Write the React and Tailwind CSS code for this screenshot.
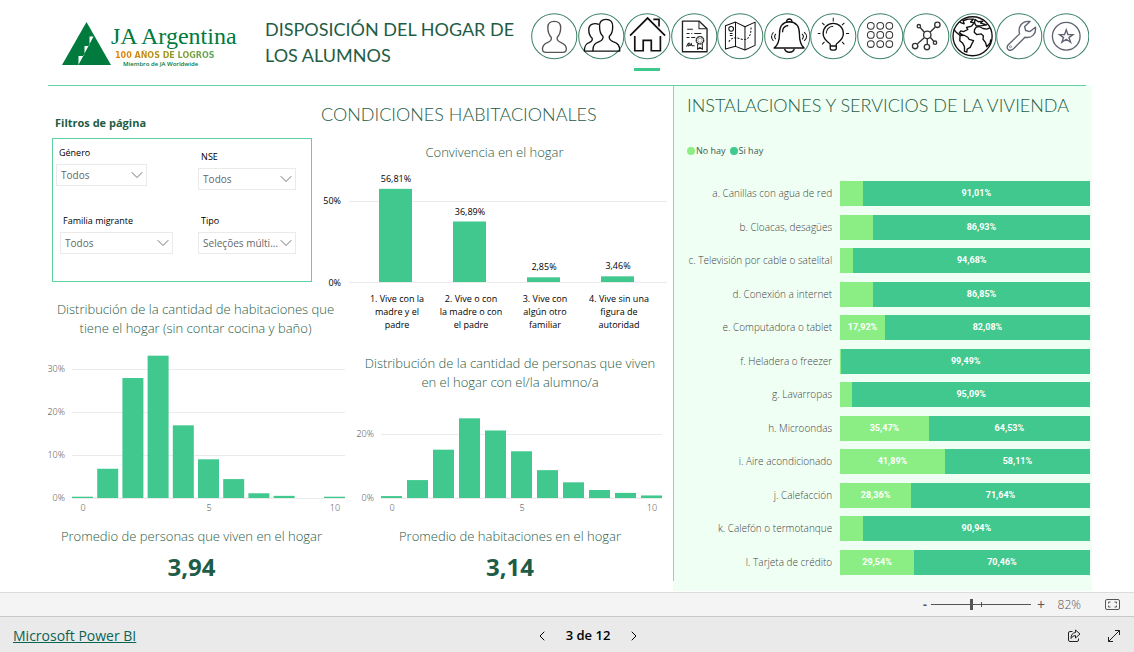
import React, { useState } from 'react';
import { ChevronDown, ChevronLeft, ChevronRight } from 'lucide-react';

// Iconos de la barra de navegación, dibujados en un lienzo de 138 x 138
const icons = {
  alumno: (
    <path
      stroke="#555"
      d="M69 25C57 25 50 32 50 43C50 56 54 66 60 72C62 80 58 84 50 87C40 91 34 96 34 107C34 115 38 117 44 117H94C101 117 105 114 105 107C105 96 98 91 88 87C80 84 76 80 78 72C84 66 88 56 88 43C88 32 81 25 69 25Z"
    />
  ),
  familia: (
    <g stroke="#111" strokeWidth="4">
      <path d="M83 19C70 19 63 27 64 40C64 54 68 64 74 69C76 77 72 81 63 85C50 90 44 95 44 113H124C124 95 118 90 104 85C95 81 91 77 93 69C99 64 103 54 103 40C103 27 96 19 83 19Z" />
      <path d="M62 34C47 28 31 34 32 50C32 62 36 70 42 75C44 82 40 85 33 88C22 92 19 98 19 113H44" />
    </g>
  ),
  hogar: (
    <g stroke="#111" strokeWidth="5" strokeLinejoin="miter">
      <path d="M18 67L70 15L122 67" />
      <path d="M87 19H104V40" />
      <path d="M32 68V112H57V81H81V112H108V68" />
    </g>
  ),
  certificado: (
    <g stroke="#222" strokeWidth="3">
      <path d="M34 24H83L107 47V115H34Z" strokeWidth="4" />
      <path d="M83 24V47H107" />
      <path d="M48 48H65M46 61H55M60 61H63M69 61H90M46 73H55M60 73H72" />
      <path d="M46 100C52 84 58 88 52 96C48 101 55 94 58 96L60 90L62 97H70" />
      <circle cx="86" cy="81" r="11" strokeWidth="4" strokeDasharray="5 1" />
      <circle cx="86" cy="81" r="6" strokeWidth="1" />
      <path d="M79 91V108L86 102L93 108V91" />
    </g>
  ),
  mapa: (
    <g stroke="#111" strokeWidth="3">
      <path d="M25 38L55 27L83 41L113 27V96L83 110L55 99L25 107Z" />
      <path d="M55 27V99M83 41V110" />
      <circle cx="42" cy="47" r="7" />
      <path d="M38 61H46M38 67H46" />
      <path strokeDasharray="6 4" d="M35 85C48 66 62 76 78 79C98 79 101 61 101 42" />
    </g>
  ),
  alerta: (
    <g stroke="#111" strokeWidth="4">
      <path d="M30 104C43 95 46 80 46 61C46 38 55 27 75 26C95 27 105 38 105 61C105 80 108 95 119 104Z" />
      <path d="M67 26C66 15 84 15 83 26M61 106C65 120 86 120 90 106" />
      <path d="M55 57C55 46 61 38 72 37" />
      <path strokeWidth="3" d="M28 57Q17 70 28 83M35 62Q28 70 35 78M119 57Q134 70 119 83M113 62Q121 70 113 78" />
    </g>
  ),
  idea: (
    <g stroke="#111" strokeWidth="4">
      <path d="M60 93C60 89 39 82 39 61C39 43 52 31 69 31C86 31 99 43 99 61C99 82 78 89 78 93V105C78 112 60 112 60 105ZM60 98H78" />
      <path d="M48 61C49 48 57 40 69 39" strokeWidth="3" />
      <path d="M69 14V25M23 61H31M107 61H116M36 29L43 36M102 29L95 36M36 93L43 86M102 93L95 86" strokeWidth="3" />
    </g>
  ),
  grilla: (
    <g stroke="#333" strokeWidth="3">
      {[38, 65, 92].map((y) => [41, 69, 96].map((x) => <circle key={`${x}-${y}`} cx={x} cy={y} r="10" />))}
    </g>
  ),
  red: (
    <g stroke="#333" strokeWidth="4">
      <path d="M80 57L95 42M64 58L51 43M64 73L43 91M72 76V92M81 72L91 84" />
      <circle cx="72" cy="65" r="11" />
      <circle cx="102" cy="35" r="8" />
      <circle cx="47" cy="39" r="5" />
      <circle cx="36" cy="98" r="8" />
      <circle cx="71" cy="101" r="8" />
      <circle cx="95" cy="88" r="5" />
    </g>
  ),
  mundo: (
    <g stroke="#111" strokeWidth="4">
      <circle cx="67" cy="69" r="58" />
      <path d="M28 27L42 32L39 23L53 18L70 18L61 27L72 29L64 39L49 43L53 49L40 55L32 53L28 59L37 65L29 66L16 55L12 48" />
      <path d="M30 67L42 66L53 72L57 78L70 82L65 91L60 102L51 107L50 116L43 114L43 100L38 90L29 82Z" />
      <path d="M74 19L84 26L98 24L91 30L109 35L90 38L78 38L73 30Z" />
      <path d="M119 44L109 48L98 46L86 40L78 42L73 49L72 57L79 64L93 62L99 68L98 78L105 87L109 100L119 89L121 78" />
    </g>
  ),
  herramientas: (
    <g stroke="#5f6270">
      <path d="M35 96L70 62C64 40 78 22 101 25L85 40L88 52L101 55L117 42C120 61 107 76 86 72L52 106C43 115 28 109 35 96Z" />
      <circle cx="43" cy="100" r="3" strokeWidth="2" />
    </g>
  ),
  favoritos: (
    <g stroke="#5f6270">
      <circle cx="69" cy="69" r="41" />
      <path strokeLinejoin="miter" d="M69 50L74 64H89L77 73L82 87L69 78L56 87L61 73L49 64H64Z" />
    </g>
  ),
};

const pages = [
  { id: 'alumno', label: 'Alumno' },
  { id: 'familia', label: 'Familia' },
  { id: 'hogar', label: 'Hogar' },
  { id: 'certificado', label: 'Certificado' },
  { id: 'mapa', label: 'Mapa' },
  { id: 'alerta', label: 'Alertas' },
  { id: 'idea', label: 'Ideas' },
  { id: 'grilla', label: 'Indicadores' },
  { id: 'red', label: 'Red' },
  { id: 'mundo', label: 'Mundo' },
  { id: 'herramientas', label: 'Herramientas' },
  { id: 'favoritos', label: 'Favoritos' },
];

const servicios = [
  { name: 'a. Canillas con agua de red', si: 91.01 },
  { name: 'b. Cloacas, desagües', si: 86.93 },
  { name: 'c. Televisión por cable o satelital', si: 94.68 },
  { name: 'd. Conexión a internet', si: 86.85 },
  { name: 'e. Computadora o tablet', si: 82.08 },
  { name: 'f. Heladera o freezer', si: 99.49 },
  { name: 'g. Lavarropas', si: 95.09 },
  { name: 'h. Microondas', si: 64.53 },
  { name: 'i. Aire acondicionado', si: 58.11 },
  { name: 'j. Calefacción', si: 71.64 },
  { name: 'k. Calefón o termotanque', si: 90.94 },
  { name: 'l. Tarjeta de crédito', si: 70.46 },
];

const convivencia = [
  { value: 56.81, lines: ['1. Vive con la', 'madre y el', 'padre'] },
  { value: 36.89, lines: ['2. Vive o con', 'la madre o con', 'el padre'] },
  { value: 2.85, lines: ['3. Vive con', 'algún otro', 'familiar'] },
  { value: 3.46, lines: ['4. Vive sin una', 'figura de', 'autoridad'] },
];

const habitaciones = [0.3, 6.8, 27.9, 33.1, 16.9, 9, 4.4, 1.1, 0.5, 0, 0.3];
const personas = [0.6, 5.6, 15.1, 24.9, 21.1, 14.6, 8.7, 4.9, 2.5, 1.6, 0.8];

const formatPct = (n) => `${n.toFixed(2).replace('.', ',')}%`;

const Logo = () => (
  <div className="flex items-start">
    <svg viewBox="0 0 49 43" className="h-[43px] w-[49px]" aria-hidden="true">
      <path d="M24.500 0L49 43H0Z" fill="#007a3d" />
      <path d="M16.500 43V34H22.500V24H27.500V14.500H31.500L16.500 43Z" fill="#fff" />
      <path d="M17.500 41.500L31.800 15.500L32.500 16L18 43Z" fill="#007a3d" />
    </svg>
    <div className="flex flex-col">
      <span className="font-['Liberation_Serif',serif] text-2xl leading-7 text-[#007a3d]">JA Argentina</span>
      <span className="ml-1 bg-linear-to-r from-[#ef7d00] via-[#8c9a2a] to-[#00b070] bg-clip-text font-['DejaVu_Sans',sans-serif] text-[8px] leading-[11px] font-bold text-transparent">
        100 AÑOS DE LOGROS
      </span>
      <span className="ml-3 text-[6px] leading-[6px] font-semibold text-[#007a3d]">Miembro de JA Worldwide</span>
    </div>
  </div>
);

const PageNav = ({ active, onSelect }) => (
  <nav className="grid w-[558px] grid-cols-12">
    {pages.map((page) => (
      <button
        key={page.id}
        type="button"
        aria-label={page.label}
        onClick={() => onSelect(page.id)}
        className="flex cursor-pointer flex-col items-center gap-2"
      >
        <svg viewBox="0 0 138 138" className="w-full" fill="none" strokeWidth="4" strokeLinejoin="round">
          <circle cx="69" cy="69" r="67" stroke="#3c8265" strokeWidth="3" />
          {icons[page.id]}
        </svg>
        {active === page.id && <span className="h-[3px] w-[26px] bg-[#41c88e]" />}
      </button>
    ))}
  </nav>
);

const Filter = ({ id, label, option, className, width }) => (
  <div className={`flex flex-col gap-[5px] ${className}`}>
    <label htmlFor={id} className="pl-[3px] text-[9px] leading-3 text-black">
      {label}
    </label>
    <div className={`relative ${width}`}>
      <select
        id={id}
        className="block h-[22px] w-full appearance-none border border-[#eaeaea] bg-white pl-1 text-[10px] text-[#666]"
      >
        <option>{option}</option>
      </select>
      <ChevronDown className="pointer-events-none absolute top-px right-0 size-5 text-[#555]" strokeWidth={1} />
    </div>
  </div>
);

const Histogram = ({ data, ticks, width, height, base, left, step, scale, label }) => (
  <svg viewBox={`0 0 ${width} ${height}`} className="w-full overflow-visible" role="img" aria-label={label}>
    {ticks.map((tick) => (
      <g key={tick}>
        <rect x={left} y={base - Math.round(tick * scale)} width={step * 10 + 21} height="1" fill="#ebebeb" />
        <text x={left - 7} y={base - tick * scale + 3} textAnchor="end" className="fill-[#444] text-[9px] font-light">
          {tick}%
        </text>
      </g>
    ))}
    {data.map((value, i) => (
      <rect key={i} x={left + i * step} y={base - value * scale} width="21" height={value * scale} fill="#41c88e" />
    ))}
    {[0, 5, 10].map((n) => (
      <text key={n} x={left + n * step + 11} y={base + 13} textAnchor="middle" className="fill-[#444] text-[9px] font-light">
        {n}
      </text>
    ))}
  </svg>
);

const ConvivenciaChart = () => (
  <svg viewBox="0 0 353 165" className="w-full" role="img" aria-label="Convivencia en el hogar">
    <rect x="29" y="31" width="318" height="1" fill="#ebebeb" />
    <rect x="29" y="112" width="318" height="1" fill="#ebebeb" />
    <text x="21" y="34" textAnchor="end" className="fill-black text-[9px]">50%</text>
    <text x="21" y="116" textAnchor="end" className="fill-black text-[9px]">0%</text>
    {convivencia.map((item, i) => {
      const h = item.value * 1.64;
      const x = 59 + i * 74;
      return (
        <g key={item.value} textAnchor="middle" className="fill-black text-[9px]">
          <rect x={x} y={112 - h} width="33" height={h} fill="#41c88e" />
          <text x={x + 17} y={105 - h}>{formatPct(item.value)}</text>
          {item.lines.map((line, n) => (
            <text key={line} x={x + 18} y={132 + n * 13}>{line}</text>
          ))}
        </g>
      );
    })}
  </svg>
);

const ServiciosPanel = () => (
  <section className="col-start-4 row-span-3 row-start-1 flex flex-col bg-[#f0fff3]">
    <div className="mb-[10px] flex flex-1 flex-col border-l border-[#7fdcb0] pr-[2px] pb-[2px] pl-[13px]">
      <h2 className="pt-[5px] font-['Lato',sans-serif] text-lg leading-7 font-light whitespace-nowrap text-[#1f5c46]">
        INSTALACIONES Y SERVICIOS DE LA VIVIENDA
      </h2>
      <div className="mt-[26px] flex gap-1 text-[9px] leading-3 text-[#3a5a4c]">
        <span className="flex items-center gap-px">
          <span className="size-2 rounded-full bg-[#8bee84]" />
          No hay
        </span>
        <span className="flex items-center gap-px">
          <span className="size-2 rounded-full bg-[#41c88e]" />
          Si hay
        </span>
      </div>
      <ul className="mt-5 flex h-[402px] flex-col">
        {servicios.map((item) => {
          const no = 100 - item.si;
          return (
            <li key={item.name} className="flex flex-1 items-center gap-2">
              <span className="flex-1 text-right text-[10px] font-light whitespace-nowrap text-[#444]">{item.name}</span>
              <span className="flex h-[25px] w-[62%] shrink-0 font-['Roboto',sans-serif] text-[9px] font-bold text-white">
                <span className="flex items-center justify-center bg-[#8bee84]" style={{ width: `${no}%` }}>
                  {no > 15 && formatPct(no)}
                </span>
                <span className="flex flex-1 items-center justify-center bg-[#41c88e]">{formatPct(item.si)}</span>
              </span>
            </li>
          );
        })}
      </ul>
    </div>
  </section>
);

const Promedio = ({ title, value }) => (
  <div className="text-center text-[#1f5c46]">
    <h3 className="text-[13px] leading-5 font-light">{title}</h3>
    <p className="mt-[3px] text-2xl leading-9 font-bold">{value}</p>
  </div>
);

const StatusBar = () => {
  const [zoom, setZoom] = useState(82);

  return (
    <div className="flex h-6 items-center justify-end border-t border-[#dcdcdc] bg-[#f4f4f4] pr-[14px] text-xs text-[#555]">
      <button type="button" aria-label="Alejar" onClick={() => setZoom(zoom - 10)} className="px-1 font-bold">
        -
      </button>
      <div className="relative flex items-center">
        <input
          type="range"
          aria-label="Zoom"
          min="10"
          max="190"
          value={zoom}
          onChange={(e) => setZoom(Number(e.target.value))}
          className="h-3 w-[100px] appearance-none bg-transparent [&::-webkit-slider-runnable-track]:h-px [&::-webkit-slider-runnable-track]:bg-[#555] [&::-webkit-slider-thumb]:-mt-[5px] [&::-webkit-slider-thumb]:h-[11px] [&::-webkit-slider-thumb]:w-[3px] [&::-webkit-slider-thumb]:appearance-none [&::-webkit-slider-thumb]:bg-[#555]"
        />
        <span className="absolute left-1/2 h-[5px] w-px bg-[#555]" />
      </div>
      <button type="button" aria-label="Acercar" onClick={() => setZoom(zoom + 10)} className="pl-[6px] text-sm">
        +
      </button>
      <span className="w-9 text-right font-light">{zoom}%</span>
      <button type="button" aria-label="Ajustar a la página" className="ml-6">
        <svg viewBox="0 0 15 11" className="h-[11px] w-[15px]" fill="none" stroke="#555">
          <rect x="0.5" y="0.5" width="14" height="10" rx="1.500" />
          <path d="M3.500 4.500V3H5.500M9.500 3H11.500V4.500M11.500 6.500V8H9.500M5.500 8H3.500V6.500" />
        </svg>
      </button>
    </div>
  );
};

const Footer = () => (
  <footer className="grid h-9 grid-cols-3 items-center border-t border-[#c8c8c8] bg-[#eaeaea] pt-[2px] pr-[13px] pl-[13px]">
    <a href="https://powerbi.microsoft.com" className="justify-self-start text-sm text-[#0b6354] underline">
      Microsoft Power BI
    </a>
    <div className="flex items-center justify-center gap-4 pl-[42px] text-[13px] font-semibold text-black">
      <button type="button" aria-label="Página anterior">
        <ChevronLeft className="size-4" strokeWidth={1.5} />
      </button>
      <span>3 de 12</span>
      <button type="button" aria-label="Página siguiente">
        <ChevronRight className="size-4" strokeWidth={1.5} />
      </button>
    </div>
    <div className="flex items-center justify-end gap-[26px]">
      <button type="button" aria-label="Compartir">
        <svg viewBox="0 0 14 14" className="size-[14px]" fill="none" stroke="#222" strokeLinejoin="round">
          <path d="M5.500 2.500H3Q1.500 2.500 1.500 4V11Q1.500 12.500 3 12.500H10Q11.500 12.500 11.500 11V9.500" />
          <path d="M8.500 1L13 5L8.500 9V6.500Q5.500 6.500 4 9.500Q4 4 8.500 3.500Z" />
        </svg>
      </button>
      <button type="button" aria-label="Pantalla completa">
        <svg viewBox="0 0 14 14" className="size-[14px]" fill="none" stroke="#222">
          <path d="M1.500 12.500L12.500 1.500M8 1.500H12.500V6M1.500 8V12.500H6" />
        </svg>
      </button>
    </div>
  </footer>
);

export default function App() {
  const [active, setActive] = useState('hogar');

  return (
    <div className="flex min-h-screen flex-col bg-white font-['Open_Sans',sans-serif]">
      <main className="flex-1 pr-[42px] pl-12">
        <header className="mr-[6px] flex h-[86px] items-start border-b border-[#62d2a2]">
          <div className="w-[217px] shrink-0 pt-[22px] pl-[14px]">
            <Logo />
          </div>
          <h1 className="flex-1 pt-4 font-['Lato',sans-serif] text-lg leading-[26px] text-[#1f5c46]">
            DISPOSICIÓN DEL HOGAR DE LOS ALUMNOS
          </h1>
          <div className="-mr-[3px] shrink-0 pt-[13px]">
            <PageNav active={active} onSelect={setActive} />
          </div>
        </header>

        <div className="grid grid-cols-[minmax(0,272fr)_minmax(0,31fr)_minmax(0,322fr)_minmax(0,419fr)] grid-rows-[minmax(212px,auto)_minmax(53px,auto)_auto]">
          <section className="col-start-1 row-start-1 pt-7 pr-2 pl-1">
            <h2 className="pl-[3px] text-[11px] leading-[18px] font-bold text-[#1f5c46]">Filtros de página</h2>
            <div className="mt-[6px] grid h-[144px] grid-cols-[142fr_114fr] grid-rows-[68px_auto] border border-[#5fd0a0] pt-2">
              <Filter id="genero" label="Género" option="Todos" className="pl-[3px]" width="w-[91px]" />
              <Filter id="nse" label="NSE" option="Todos" className="pt-1 pl-[2px]" width="w-[98px]" />
              <Filter id="migrante" label="Familia migrante" option="Todos" className="pl-[7px]" width="w-[113px]" />
              <Filter id="tipo" label="Tipo" option="Seleções múlti..." className="pl-[2px]" width="w-[98px]" />
            </div>
          </section>

          <section className="col-span-2 col-start-2 row-span-2 row-start-1 pt-[14px]">
            <h2 className="pl-px font-['Lato',sans-serif] text-lg leading-7 font-light text-[#1f5c46]">
              CONDICIONES HABITACIONALES
            </h2>
            <h3 className="mt-[14px] pr-1 text-center text-[13px] leading-5 font-light text-[#1f5c46]">Convivencia en el hogar</h3>
            <div className="mt-2">
              <ConvivenciaChart />
            </div>
          </section>

          <section className="col-span-2 col-start-1 row-span-2 row-start-2 pt-[2px]">
            <h3 className="pr-2 text-center text-[13px] leading-[19px] font-light text-[#1f5c46]">
              Distribución de la cantidad de habitaciones que tiene el hogar (sin contar cocina y baño)
            </h3>
            <div className="mt-[3px]">
              <Histogram
                data={habitaciones}
                ticks={[0, 10, 20, 30]}
                width={303}
                height={175}
                base={157}
                left={24}
                step={25.2}
                scale={4.3}
                label="Distribución de la cantidad de habitaciones"
              />
            </div>
            <div className="mt-[10px] pr-4">
              <Promedio title="Promedio de personas que viven en el hogar" value="3,94" />
            </div>
          </section>

          <section className="col-start-3 row-start-3 pt-[3px]">
            <h3 className="pr-3 pl-2 text-center text-[13px] leading-[19px] font-light text-[#1f5c46]">
              Distribución de la cantidad de personas que viven en el hogar con el/la alumno/a
            </h3>
            <div className="mt-1">
              <Histogram
                data={personas}
                ticks={[0, 20]}
                width={322}
                height={120}
                base={102}
                left={30}
                step={26}
                scale={3.2}
                label="Distribución de la cantidad de personas"
              />
            </div>
            <div className="mt-[10px] pr-1">
              <Promedio title="Promedio de habitaciones en el hogar" value="3,14" />
            </div>
          </section>

          <ServiciosPanel />
        </div>
      </main>
      <StatusBar />
      <Footer />
    </div>
  );
}
